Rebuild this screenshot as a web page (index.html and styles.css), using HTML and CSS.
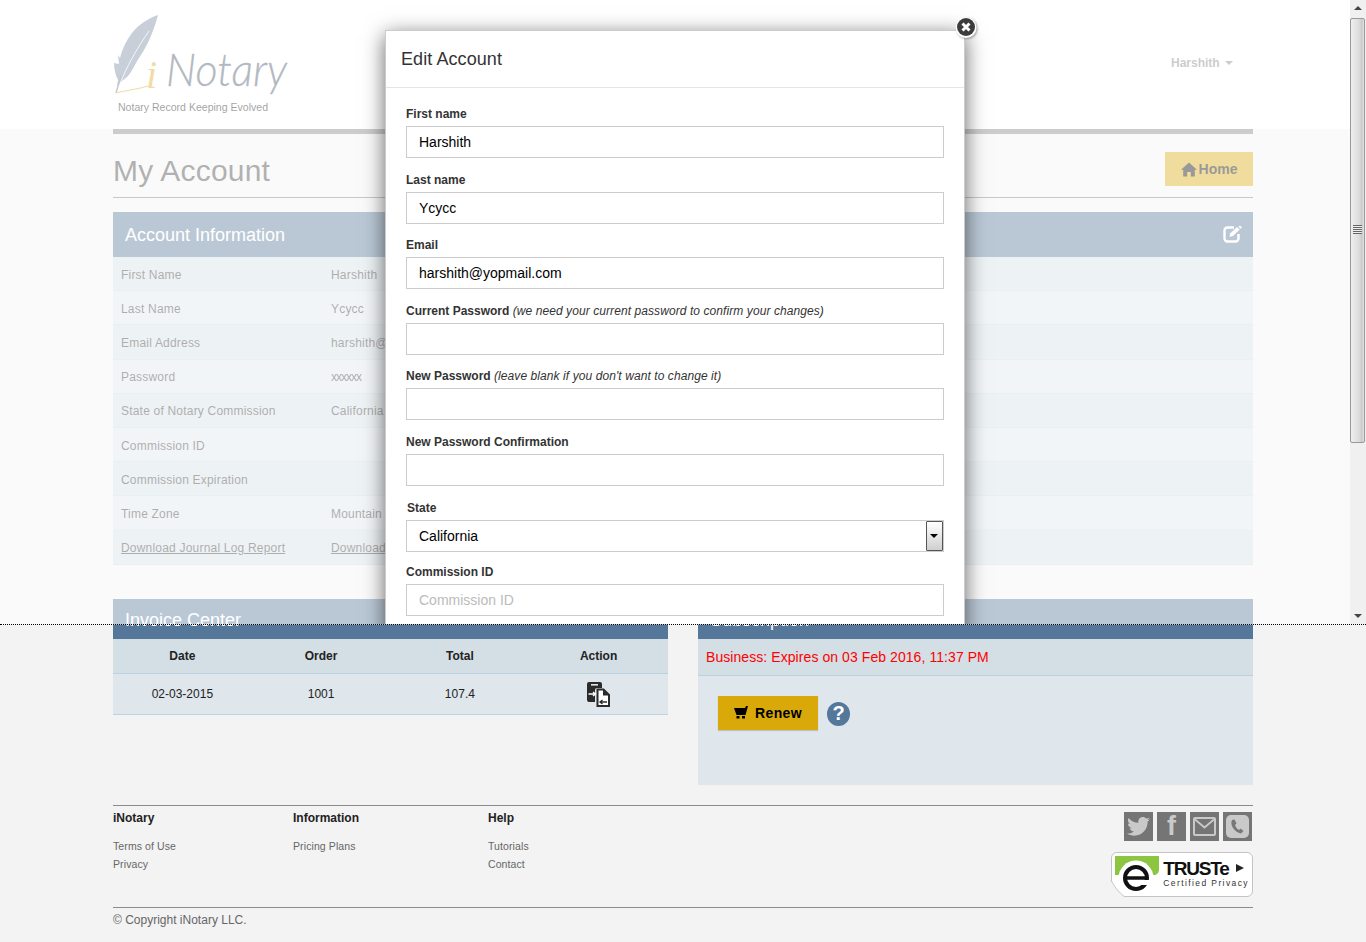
FILE: index.html
```html
<!DOCTYPE html>
<html lang="en">
<head>
<meta charset="utf-8">
<title>My Account - iNotary</title>
<link rel="stylesheet" href="styles.css">
</head>
<body>
<header class="site-header">
  <div class="wrap header-inner">
    <svg class="logo" width="180" height="104" viewBox="0 0 180 104">
      <path d="M45 1 C36 4 26 10 19 19 C13 27 9 35 7 44 L5 41 L6 50 L1 49 C1 56 3 62 5 66 L4 72 L9 67 L14 63 C19 58 22 50 26 44 C33 34 40 20 45 1 Z" fill="#75879f"/>
      <path d="M7 70 C13 54 24 34 36 17" fill="none" stroke="#fff" stroke-width="0.8"/>
      <path d="M3 79 L8 62" fill="none" stroke="#6a7488" stroke-width="1.4"/>
      <path d="M3 79 C14 76 26 75 35 72" fill="none" stroke="#e0a520" stroke-width="1.200"/>
      <text class="logo-i" x="33" y="74">i</text>
      <text class="logo-word" x="53" y="72" textLength="121" lengthAdjust="spacingAndGlyphs">Notary</text>
      <text class="logo-tag" x="5" y="97" textLength="150" lengthAdjust="spacingAndGlyphs">Notary Record Keeping Evolved</text>
    </svg>
    <div class="user-menu">Harshith <span class="caret"></span></div>
  </div>
</header>

<main class="wrap">
  <div class="top-bar"></div>
  <div class="title-row">
    <h1>My Account</h1>
    <a class="home-btn">
      <svg width="16" height="15" viewBox="0 0 16 15"><path d="M8 0.500 L16 7.800 L13.800 7.800 L13.800 14.500 L9.800 14.500 L9.800 10 L6.200 10 L6.200 14.500 L2.200 14.500 L2.200 7.800 L0 7.800 Z" fill="#000"/></svg>
      Home
    </a>
  </div>

  <section class="info-panel">
    <div class="panel-head info-head">
      <span>Account Information</span>
      <svg width="20" height="18" viewBox="0 0 20 18"><path d="M11 2.500 H4.500 A3 3 0 0 0 1.500 5.500 V13.500 A3 3 0 0 0 4.500 16.500 H12.500 A3 3 0 0 0 15.500 13.500 V9" fill="none" stroke="#fff" stroke-width="2.400"/><path d="M6.500 12 L7.300 8.300 L14 2 L16.700 4.600 L10 11 Z" fill="#fff"/><path d="M17 0.500 L19 2.500 L17.600 3.800 L15.500 1.800 Z" fill="#fff"/></svg>
    </div>
    <div class="info-rows">
      <div class="info-row"><span>First Name</span><span>Harshith</span></div>
      <div class="info-row"><span>Last Name</span><span>Ycycc</span></div>
      <div class="info-row"><span>Email Address</span><span>harshith@yopmail.com</span></div>
      <div class="info-row"><span>Password</span><span class="pw-mask">xxxxxx</span></div>
      <div class="info-row"><span>State of Notary Commission</span><span>California</span></div>
      <div class="info-row"><span>Commission ID</span><span></span></div>
      <div class="info-row"><span>Commission Expiration</span><span></span></div>
      <div class="info-row"><span>Time Zone</span><span>Mountain Time (US &amp; Canada)</span></div>
      <div class="info-row"><a>Download Journal Log Report</a><a>Download</a></div>
    </div>
  </section>

  <div class="two-col">
    <section class="panel">
      <div class="panel-head">Invoice Center</div>
      <table class="invoice">
        <thead><tr><th>Date</th><th>Order</th><th>Total</th><th>Action</th></tr></thead>
        <tbody>
          <tr>
            <td>02-03-2015</td><td>1001</td><td>107.4</td>
            <td>
              <svg class="doc-icon" width="24" height="25" viewBox="1 0 24 25">
                <path d="M1 2 A2 2 0 0 1 3 0 H14 A2 2 0 0 1 16 2 V6 H11 A2 2 0 0 0 9 8 V20 H3 A2 2 0 0 1 1 18 Z" fill="#2b2b2b"/>
                <rect x="5" y="2" width="7" height="1.600" fill="#dfe7ed"/>
                <path d="M11.500 7.500 H17.500 L23 13 V24 H11.500 Z" fill="#fff" stroke="#2b2b2b" stroke-width="2"/>
                <path d="M17 7.500 V13.500 H23 Z" fill="#2b2b2b"/>
                <path d="M2.500 12 H9 M7 10 L9.500 12 L7 14" fill="none" stroke="#fff" stroke-width="1.300"/>
                <path d="M21 20 H14.500 M16.500 18 L14 20 L16.500 22" fill="none" stroke="#2b2b2b" stroke-width="1.300"/>
              </svg>
            </td>
          </tr>
        </tbody>
      </table>
    </section>
    <section class="panel sub-panel">
      <div class="panel-head">Subscription</div>
      <div class="sub-status">Business: Expires on 03 Feb 2016, 11:37 PM</div>
      <div class="sub-actions">
        <a class="renew-btn">
          <svg width="14" height="13" viewBox="0 0 14 13"><path d="M0 2 H11 L12 0 H14 L11.500 9 H2.500 Z" fill="#000"/><rect x="2.500" y="10" width="3" height="2.500" fill="#000"/><rect x="8" y="10" width="3" height="2.500" fill="#000"/></svg>
          Renew
        </a>
        <span class="help">?</span>
      </div>
    </section>
  </div>
</main>

<footer class="wrap site-footer">
  <div class="footer-main">
    <div class="fcol fcol-1"><h4>iNotary</h4><a>Terms of Use</a><a>Privacy</a></div>
    <div class="fcol fcol-2"><h4>Information</h4><a>Pricing Plans</a></div>
    <div class="fcol fcol-3"><h4>Help</h4><a>Tutorials</a><a>Contact</a></div>
    <div class="fcol-right">
      <div class="socials">
        <span class="soc">
          <svg width="23" height="19" viewBox="0 0 23 19"><path d="M23 2.300 C22.100 2.700 21.200 3 20.300 3.100 C21.300 2.500 22 1.600 22.400 0.500 C21.500 1 20.500 1.400 19.400 1.600 C18.500 0.600 17.300 0 16 0 C13.400 0 11.300 2.100 11.300 4.700 C11.300 5.100 11.300 5.400 11.400 5.800 C7.500 5.600 4 3.700 1.600 0.900 C1.200 1.600 1 2.400 1 3.200 C1 4.800 1.800 6.200 3.100 7.100 C2.300 7.100 1.600 6.900 1 6.500 C1 8.800 2.600 10.700 4.800 11.100 C4.100 11.300 3.300 11.300 2.600 11.200 C3.200 13.100 4.900 14.400 7 14.500 C5 16 2.500 16.800 0 16.500 C2.100 17.900 4.600 18.700 7.200 18.700 C15.900 18.700 20.600 11.500 20.600 5.300 L20.600 4.700 C21.500 4 22.300 3.200 23 2.300 Z" fill="#c9c9c9"/></svg>
        </span>
        <span class="soc soc-f">f</span>
        <span class="soc">
          <svg width="23" height="19" viewBox="0 0 23 19"><rect x="1" y="1" width="21" height="17" rx="1" fill="none" stroke="#c9c9c9" stroke-width="2"/><path d="M1.500 2 L11.500 10.500 L21.500 2" fill="none" stroke="#c9c9c9" stroke-width="1.800"/></svg>
        </span>
        <span class="soc">
          <svg width="23" height="23" viewBox="0 0 23 23"><rect width="23" height="23" rx="5" fill="#c9c9c9"/><path d="M6 5 C5 7 5 10 7 13 C9 16 12 18 15 18.500 L17.500 16 L14.500 13.500 L13 15 C11.500 14.500 9.500 12 9 10 L10.500 8.500 L8.500 4.500 Z" fill="#777"/></svg>
        </span>
      </div>
      <div class="truste">
        <svg class="truste-mark" width="48" height="44" viewBox="0 0 48 44">
          <path d="M-1 27 C2 33 6 39 13 44 L-1 44 Z" fill="#f3f3f3"/>
          <path d="M-1 27 C2 33 6 39 13 44" fill="none" stroke="#c4c4c4"/>
          <path d="M3 3 H47 V16 C47 20 45 22 41 22 H3 Z" fill="#8cc640"/>
          <circle cx="24" cy="25" r="17.500" fill="#fff"/>
          <circle cx="24" cy="25" r="11" fill="none" stroke="#111" stroke-width="4"/>
          <path d="M15 25 H33" stroke="#111" stroke-width="3.500"/>
          <rect x="28" y="27" width="11" height="5" fill="#fff"/>
        </svg>
        <div class="truste-text">
          <div class="truste-name">TRUSTe <span class="truste-arrow"></span></div>
          <div class="truste-sub">Certified Privacy</div>
        </div>
      </div>
    </div>
  </div>
  <div class="copyright">© Copyright iNotary LLC.</div>
</footer>

<div class="overlay">
  <div class="modal">
    <div class="modal-head">Edit Account</div>
    <form class="modal-body">
      <div class="field"><label>First name</label><input type="text" value="Harshith"></div>
      <div class="field"><label>Last name</label><input type="text" value="Ycycc"></div>
      <div class="field"><label>Email</label><input type="text" value="harshith@yopmail.com"></div>
      <div class="field"><label>Current Password <i>(we need your current password to confirm your changes)</i></label><input type="password"></div>
      <div class="field"><label>New Password <i>(leave blank if you don't want to change it)</i></label><input type="password"></div>
      <div class="field"><label>New Password Confirmation</label><input type="password"></div>
      <div class="field field-state"><label>State</label>
        <div class="select-box"><select><option>California</option></select><span class="select-btn"></span></div>
      </div>
      <div class="field"><label>Commission ID</label><input type="text" placeholder="Commission ID"></div>
    </form>
  </div>
  <div class="scrollbar">
    <span class="sb-up"></span>
    <div class="sb-thumb"><span class="sb-grip"></span></div>
    <span class="sb-down"></span>
  </div>
</div>
<svg class="modal-close" width="24" height="24" viewBox="0 0 24 24"><circle cx="12" cy="12.500" r="10.500" fill="#fff"/><circle cx="12" cy="12" r="9" fill="#3c3c3c"/><path d="M8.500 8.500 L15.500 15.500 M15.500 8.500 L8.500 15.500" stroke="#fff" stroke-width="3"/></svg>
</body>
</html>
```

FILE: styles.css
```css
* { box-sizing: border-box; }
html, body { margin: 0; padding: 0; }
body {
  position: relative;
  min-height: 942px;
  overflow: hidden;
  background-color: #f3f3f3;
  font-family: "Liberation Sans", Arial, sans-serif;
  font-size: 12px;
  color: #333;
}
.wrap { width: 1140px; margin: 0 auto; }

.site-header { height: 129px; background: #fff; }
.header-inner { display: flex; justify-content: space-between; padding-top: 14px; }
.logo { display: block; }
.logo-word { font-family: Lato, "Open Sans", sans-serif; font-weight: 300; font-style: italic; font-size: 46px; fill: #3f4f66; stroke: #3f4f66; stroke-width: 0.3px; }
.logo-i { font-family: "Liberation Serif", serif; font-style: italic; font-size: 40px; fill: #e0a520; }
.logo-tag { font-family: "Liberation Sans", sans-serif; font-size: 11px; fill: #111; }
.user-menu { margin: 42px 20px 0 0; font-size: 12px; font-weight: bold; color: #808080; }
.caret {
  display: inline-block; margin-left: 2px; vertical-align: 2px;
  border-top: 4px solid #808080; border-left: 4px solid transparent; border-right: 4px solid transparent;
}

.top-bar { height: 5px; background: #808080; }
.title-row { display: flex; justify-content: space-between; height: 64px; border-bottom: 1px solid #777; }
.title-row h1 { margin: 18px 0 0; font-size: 30px; line-height: 38px; font-weight: normal; color: #3d3d3d; letter-spacing: 0.2px; }
.home-btn {
  display: flex; align-items: center; gap: 2px; justify-content: center;
  width: 88px; height: 34px; margin-top: 18px;
  background: #d9a90a; color: #000; font-size: 14px; font-weight: bold;
}

.info-panel { margin-top: 14px; }
.panel-head { height: 40px; padding: 11px 12px 0; background: #54779a; color: #fff; font-size: 18px; line-height: 20px; }
.info-head { height: 45px; padding: 13px 10px 0 12px; display: flex; justify-content: space-between; }
.info-rows { display: grid; grid-auto-rows: 34.200px; }
.info-row {
  display: grid; grid-template-columns: 210px 1fr; align-items: center; padding: 2px 8px 0;
  background: #d3dee5; border-bottom: 1px solid #c9d7e0; color: #333; font-size: 12px; letter-spacing: 0.2px;
}
.info-row:nth-child(even) { background: #dfe7ed; }
.info-row a { text-decoration: underline; }
.info-row .pw-mask { letter-spacing: -1px; }

.two-col { display: flex; gap: 30px; margin-top: 34.200px; height: 186px; }
.panel { width: 555px; }
.invoice { width: 100%; border-collapse: collapse; table-layout: fixed; background: #dfe7ed; border-bottom: 1px solid #b9d3e3; text-align: center; }
.invoice th { height: 35px; padding: 0; background: #d3dee5; border-bottom: 1px solid #bcd1de; font-size: 12px; color: #222; }
.invoice td { height: 41px; padding: 0; font-size: 12px; color: #222; }
.doc-icon { display: block; margin: 0 auto; }

.sub-panel { background: #dfe7ed; }
.sub-status { height: 37px; padding: 0 8px; background: #d3dee5; border-bottom: 1px solid #bcd1de; color: #f00; font-size: 14px; line-height: 36px; letter-spacing: 0.07px; }
.sub-actions { display: flex; align-items: center; gap: 9px; padding: 20px 0 0 20px; }
.renew-btn {
  display: flex; align-items: center; justify-content: center; gap: 7px;
  width: 100px; height: 34px; background: #d9a90a; color: #000; font-size: 14px; font-weight: bold; letter-spacing: 0.4px;
  box-shadow: 0 1px 1px rgba(0,0,0,.15);
}
.help {
  display: flex; align-items: center; justify-content: center;
  width: 23px; height: 24px; margin-top: 2px; border-radius: 50%; background: #54779a; color: #fff; font-size: 20px; font-weight: bold;
}

.site-footer { margin-top: 20px; }
.footer-main { display: flex; height: 103px; border-top: 1px solid #8c8c8c; border-bottom: 1px solid #8c8c8c; }
.fcol { display: flex; flex-direction: column; }
.fcol-1 { width: 180px; }
.fcol-2 { width: 195px; }
.fcol-3 { width: 180px; }
.fcol h4 { margin: 5px 0 12px; font-size: 12px; line-height: 14px; font-weight: bold; color: #222; }
.fcol a { font-size: 10.500px; line-height: 18px; color: #666; letter-spacing: 0.1px; }
.fcol-right { margin-left: auto; display: flex; flex-direction: column; align-items: flex-end; padding-top: 6px; }
.socials { display: flex; gap: 4px; padding-right: 1px; }
.soc { display: flex; align-items: center; justify-content: center; width: 29px; height: 29px; background: #757575; }
.soc-f { color: #c9c9c9; font-size: 27px; font-weight: bold; font-family: "Liberation Sans", sans-serif; }
.truste {
  position: relative;
  display: flex; align-items: flex-start; justify-content: flex-end;
  width: 142px; height: 45px; margin-top: 11px; padding: 6px 3px 0 0;
  background: #fff; border: 1px solid #c4c4c4; border-radius: 6px;
}
.truste-mark { position: absolute; left: 0; top: 0; overflow: visible; }
.truste-name { font-size: 19px; line-height: 19px; font-weight: bold; color: #111; letter-spacing: -1.200px; }
.truste-arrow {
  display: inline-block; vertical-align: 3px; margin-left: 3px;
  border-left: 8px solid #222; border-top: 4px solid transparent; border-bottom: 4px solid transparent;
}
.truste-sub { font-size: 8.500px; line-height: 11px; color: #333; letter-spacing: 1.400px; white-space: nowrap; }
.copyright { padding-top: 5px; font-size: 12px; line-height: 15px; color: #666; }

.overlay {
  position: absolute; left: 0; top: 0; right: 0; height: 625px; overflow: hidden;
  background: rgba(255,255,255,.6); border-bottom: 1px dotted #000;
}
.modal {
  position: absolute; left: 385px; top: 30px; width: 580px; height: 700px;
  background: #fff; border: 1px solid #ccc; box-shadow: 0 5px 20px rgba(0,0,0,.6);
}
.modal-head { height: 57px; padding: 18px 15px 0; font-size: 18px; line-height: 20px; color: #333; border-bottom: 1px solid #e5e5e5; letter-spacing: 0.08px; }
.modal-body { padding: 19px 20px 0; }
.field { height: 65.600px; }
.field label { display: block; height: 19px; font-size: 12px; line-height: 14px; font-weight: bold; color: #333; white-space: nowrap; }
.field i { font-weight: normal; letter-spacing: 0.08px; }
.field input, .field select {
  display: block; width: 100%; height: 32px; padding: 0 12px;
  background: #fff; border: 1px solid #ccc; border-radius: 0; outline: none;
  font-family: "Liberation Sans", Arial, sans-serif; font-size: 14px; color: #000;
  appearance: none;
}
.field input::placeholder { color: #bbb; opacity: 1; }
.field-state { height: 64px; }
.field-state label { padding-left: 1px; }
.select-box { position: relative; }
.select-btn {
  position: absolute; right: 1px; top: 1px; width: 17px; height: 30px;
  background: linear-gradient(#fff, #cfcfcf); border: 1px solid #555; border-radius: 1px;
}
.select-btn::after {
  content: ""; position: absolute; left: 3px; top: 12px;
  border-top: 4px solid #000; border-left: 4px solid transparent; border-right: 4px solid transparent;
}

.scrollbar { position: absolute; right: 0; top: 0; bottom: 0; width: 16px; background: #f0f0f0; }
.sb-up, .sb-down { position: absolute; left: 4px; border-left: 4px solid transparent; border-right: 4px solid transparent; }
.sb-up { top: 6px; border-bottom: 4px solid #444; }
.sb-down { bottom: 6px; border-top: 4px solid #444; }
.sb-thumb {
  position: absolute; left: 0; top: 18px; width: 15px; height: 425px;
  background: linear-gradient(90deg, #eee, #ddd 60%, #c9c9c9 85%, #e6e6e6);
  border: 1px solid #999; border-radius: 2px;
}
.sb-grip {
  position: absolute; left: 2px; top: 206px; width: 9px; height: 9px;
  background: repeating-linear-gradient(#666 0 1px, #eee 1px 2px);
}
.modal-close { position: absolute; left: 954px; top: 15px; filter: drop-shadow(1px 1px 1px rgba(0,0,0,.35)); }
```
